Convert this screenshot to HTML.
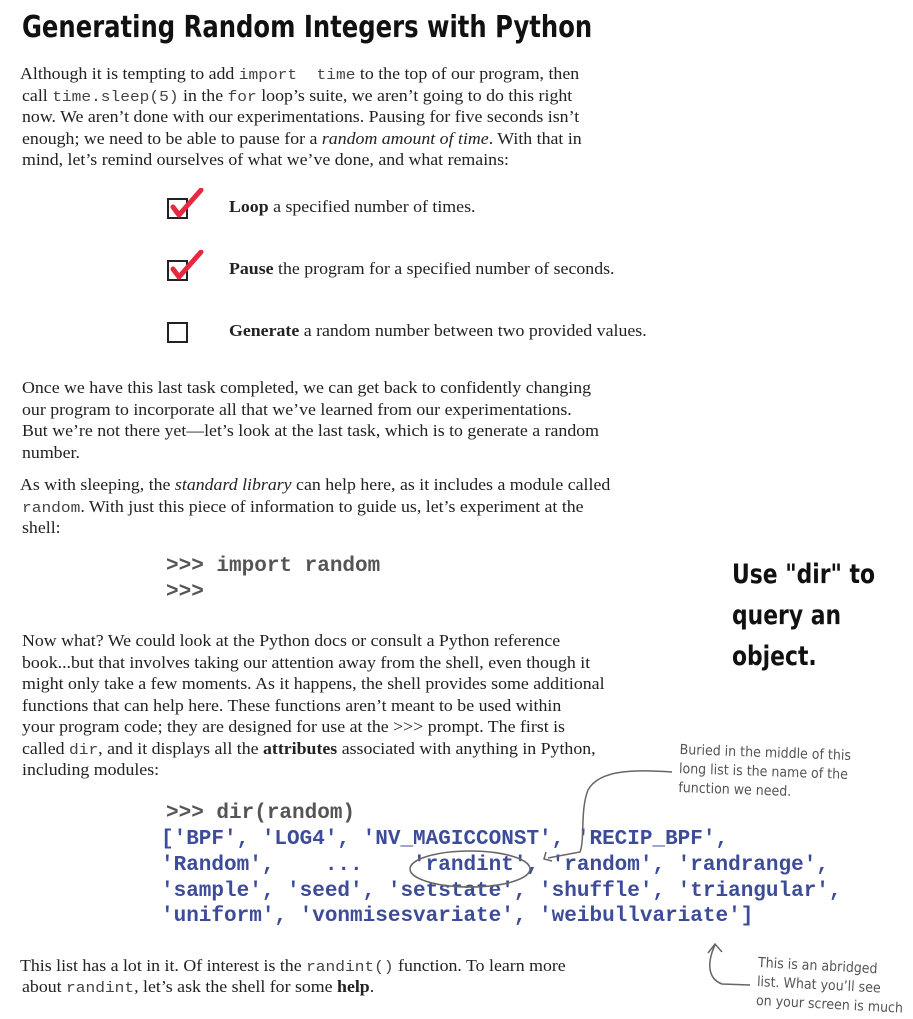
<!DOCTYPE html>
<html><head><meta charset="utf-8"><style>
html,body{margin:0;padding:0;background:#fff;}
body{width:913px;height:1011px;position:relative;overflow:hidden;font-family:"Liberation Serif",serif;color:#222;}
.l{position:absolute;white-space:nowrap;font-size:16.5px;line-height:20px;transform:scaleX(1.08);transform-origin:left;}
.m{font-family:"Liberation Mono",monospace;font-size:15px;color:#444;}
.c{position:absolute;white-space:nowrap;font-family:"Liberation Mono",monospace;font-weight:bold;font-size:21px;line-height:24px;}
.g{color:#555;}
.b{color:#3d4c99;}
.h{position:absolute;white-space:nowrap;font-family:"DejaVu Sans Condensed","DejaVu Sans",sans-serif;color:#555;font-size:14px;line-height:19px;}
.box{position:absolute;width:21px;height:21px;border:2px solid #222;box-sizing:border-box;}
.r{position:absolute;font-family:"DejaVu Sans Condensed","DejaVu Sans",sans-serif;font-weight:bold;font-size:27px;line-height:41px;color:#111;transform:scaleX(0.9);transform-origin:left;white-space:nowrap;}
</style></head><body>
<div style="position:absolute;left:22px;top:8px;font-family:'DejaVu Sans Condensed','DejaVu Sans',sans-serif;font-weight:bold;font-size:30px;line-height:40px;white-space:nowrap;color:#111;transform:scaleX(0.9);transform-origin:left;">Generating Random Integers with Python</div>

<div class="l" style="left:20px;top:64px">Although it is tempting to add <span class="m">import&nbsp; time</span> to the top of our program, then</div>
<div class="l" style="left:22px;top:86px">call <span class="m">time.sleep(5)</span> in the <span class="m">for</span> loop’s suite, we aren’t going to do this right</div>
<div class="l" style="left:22px;top:107px">now. We aren’t done with our experimentations. Pausing for five seconds isn’t</div>
<div class="l" style="left:22px;top:129px">enough; we need to be able to pause for a <i>random amount of time</i>. With that in</div>
<div class="l" style="left:22px;top:150px">mind, let’s remind ourselves of what we’ve done, and what remains:</div>

<div class="box" style="left:167px;top:198px"></div>
<svg style="position:absolute;left:168px;top:188px" width="36" height="32" viewBox="0 0 36 32"><path d="M5 19 L11 27 L33 2" fill="none" stroke="#e8283f" stroke-width="5" stroke-linecap="round" stroke-linejoin="round"/></svg>
<div class="l" style="left:229px;top:197px"><b>Loop</b> a specified number of times.</div>

<div class="box" style="left:167px;top:260px"></div>
<svg style="position:absolute;left:168px;top:250px" width="36" height="32" viewBox="0 0 36 32"><path d="M5 19 L11 27 L33 2" fill="none" stroke="#e8283f" stroke-width="5" stroke-linecap="round" stroke-linejoin="round"/></svg>
<div class="l" style="left:229px;top:259px"><b>Pause</b> the program for a specified number of seconds.</div>

<div class="box" style="left:167px;top:322px"></div>
<div class="l" style="left:229px;top:321px"><b>Generate</b> a random number between two provided values.</div>

<div class="l" style="left:22px;top:378px">Once we have this last task completed, we can get back to confidently changing</div>
<div class="l" style="left:22px;top:400px">our program to incorporate all that we’ve learned from our experimentations.</div>
<div class="l" style="left:22px;top:421px">But we’re not there yet—let’s look at the last task, which is to generate a random</div>
<div class="l" style="left:22px;top:443px">number.</div>

<div class="l" style="left:20px;top:475px">As with sleeping, the <i>standard library</i> can help here, as it includes a module called</div>
<div class="l" style="left:22px;top:497px"><span class="m">random</span>. With just this piece of information to guide us, let’s experiment at the</div>
<div class="l" style="left:22px;top:518px">shell:</div>

<div class="c g" style="left:166px;top:555px">&gt;&gt;&gt; import random</div>
<div class="c g" style="left:166px;top:581px">&gt;&gt;&gt;</div>

<div class="r" style="left:732px;top:554px">Use "dir" to<br>query an<br>object.</div>

<div class="l" style="left:22px;top:631px">Now what? We could look at the Python docs or consult a Python reference</div>
<div class="l" style="left:22px;top:653px">book...but that involves taking our attention away from the shell, even though it</div>
<div class="l" style="left:22px;top:674px">might only take a few moments. As it happens, the shell provides some additional</div>
<div class="l" style="left:22px;top:696px">functions that can help here. These functions aren’t meant to be used within</div>
<div class="l" style="left:22px;top:717px">your program code; they are designed for use at the &gt;&gt;&gt; prompt. The first is</div>
<div class="l" style="left:22px;top:739px">called <span class="m">dir</span>, and it displays all the <b>attributes</b> associated with anything in Python,</div>
<div class="l" style="left:22px;top:760px">including modules:</div>

<div class="h" style="left:679px;top:741px;transform:rotate(2deg);transform-origin:left">Buried in the middle of this<br>long list is the name of the<br>function we need.</div>

<div class="c g" style="left:166px;top:802px">&gt;&gt;&gt; dir(random)</div>
<div class="c b" style="left:161px;top:828px">['BPF', 'LOG4', 'NV_MAGICCONST', 'RECIP_BPF',</div>
<div class="c b" style="left:161px;top:854px">'Random',&nbsp;&nbsp;&nbsp; ...&nbsp;&nbsp;&nbsp; 'randint', 'random', 'randrange',</div>
<div class="c b" style="left:161px;top:880px">'sample', 'seed', 'setstate', 'shuffle', 'triangular',</div>
<div class="c b" style="left:161px;top:905px">'uniform', 'vonmisesvariate', 'weibullvariate']</div>

<svg style="position:absolute;left:0;top:0" width="913" height="1011">
<path d="M672 772 C640 770 600 768 588 790 C580 810 585 840 580 852 L548 858" fill="none" stroke="#666" stroke-width="1.5"/>
<path d="M546 852 L544 859 L552 861" fill="none" stroke="#666" stroke-width="1.5"/>
<ellipse cx="470" cy="869" rx="60" ry="18" fill="none" stroke="#666" stroke-width="1.5"/>
<path d="M715 945 C708 960 706 978 722 984 L750 985" fill="none" stroke="#666" stroke-width="1.5"/>
<path d="M708 953 L715 944 L722 952" fill="none" stroke="#666" stroke-width="1.5"/>
</svg>

<div class="h" style="left:757px;top:954px;transform:rotate(3deg);transform-origin:left">This is an abridged<br>list. What you’ll see<br>on your screen is much</div>

<div class="l" style="left:20px;top:956px">This list has a lot in it. Of interest is the <span class="m">randint()</span> function. To learn more</div>
<div class="l" style="left:22px;top:977px">about <span class="m">randint</span>, let’s ask the shell for some <b>help</b>.</div>
</body></html>
